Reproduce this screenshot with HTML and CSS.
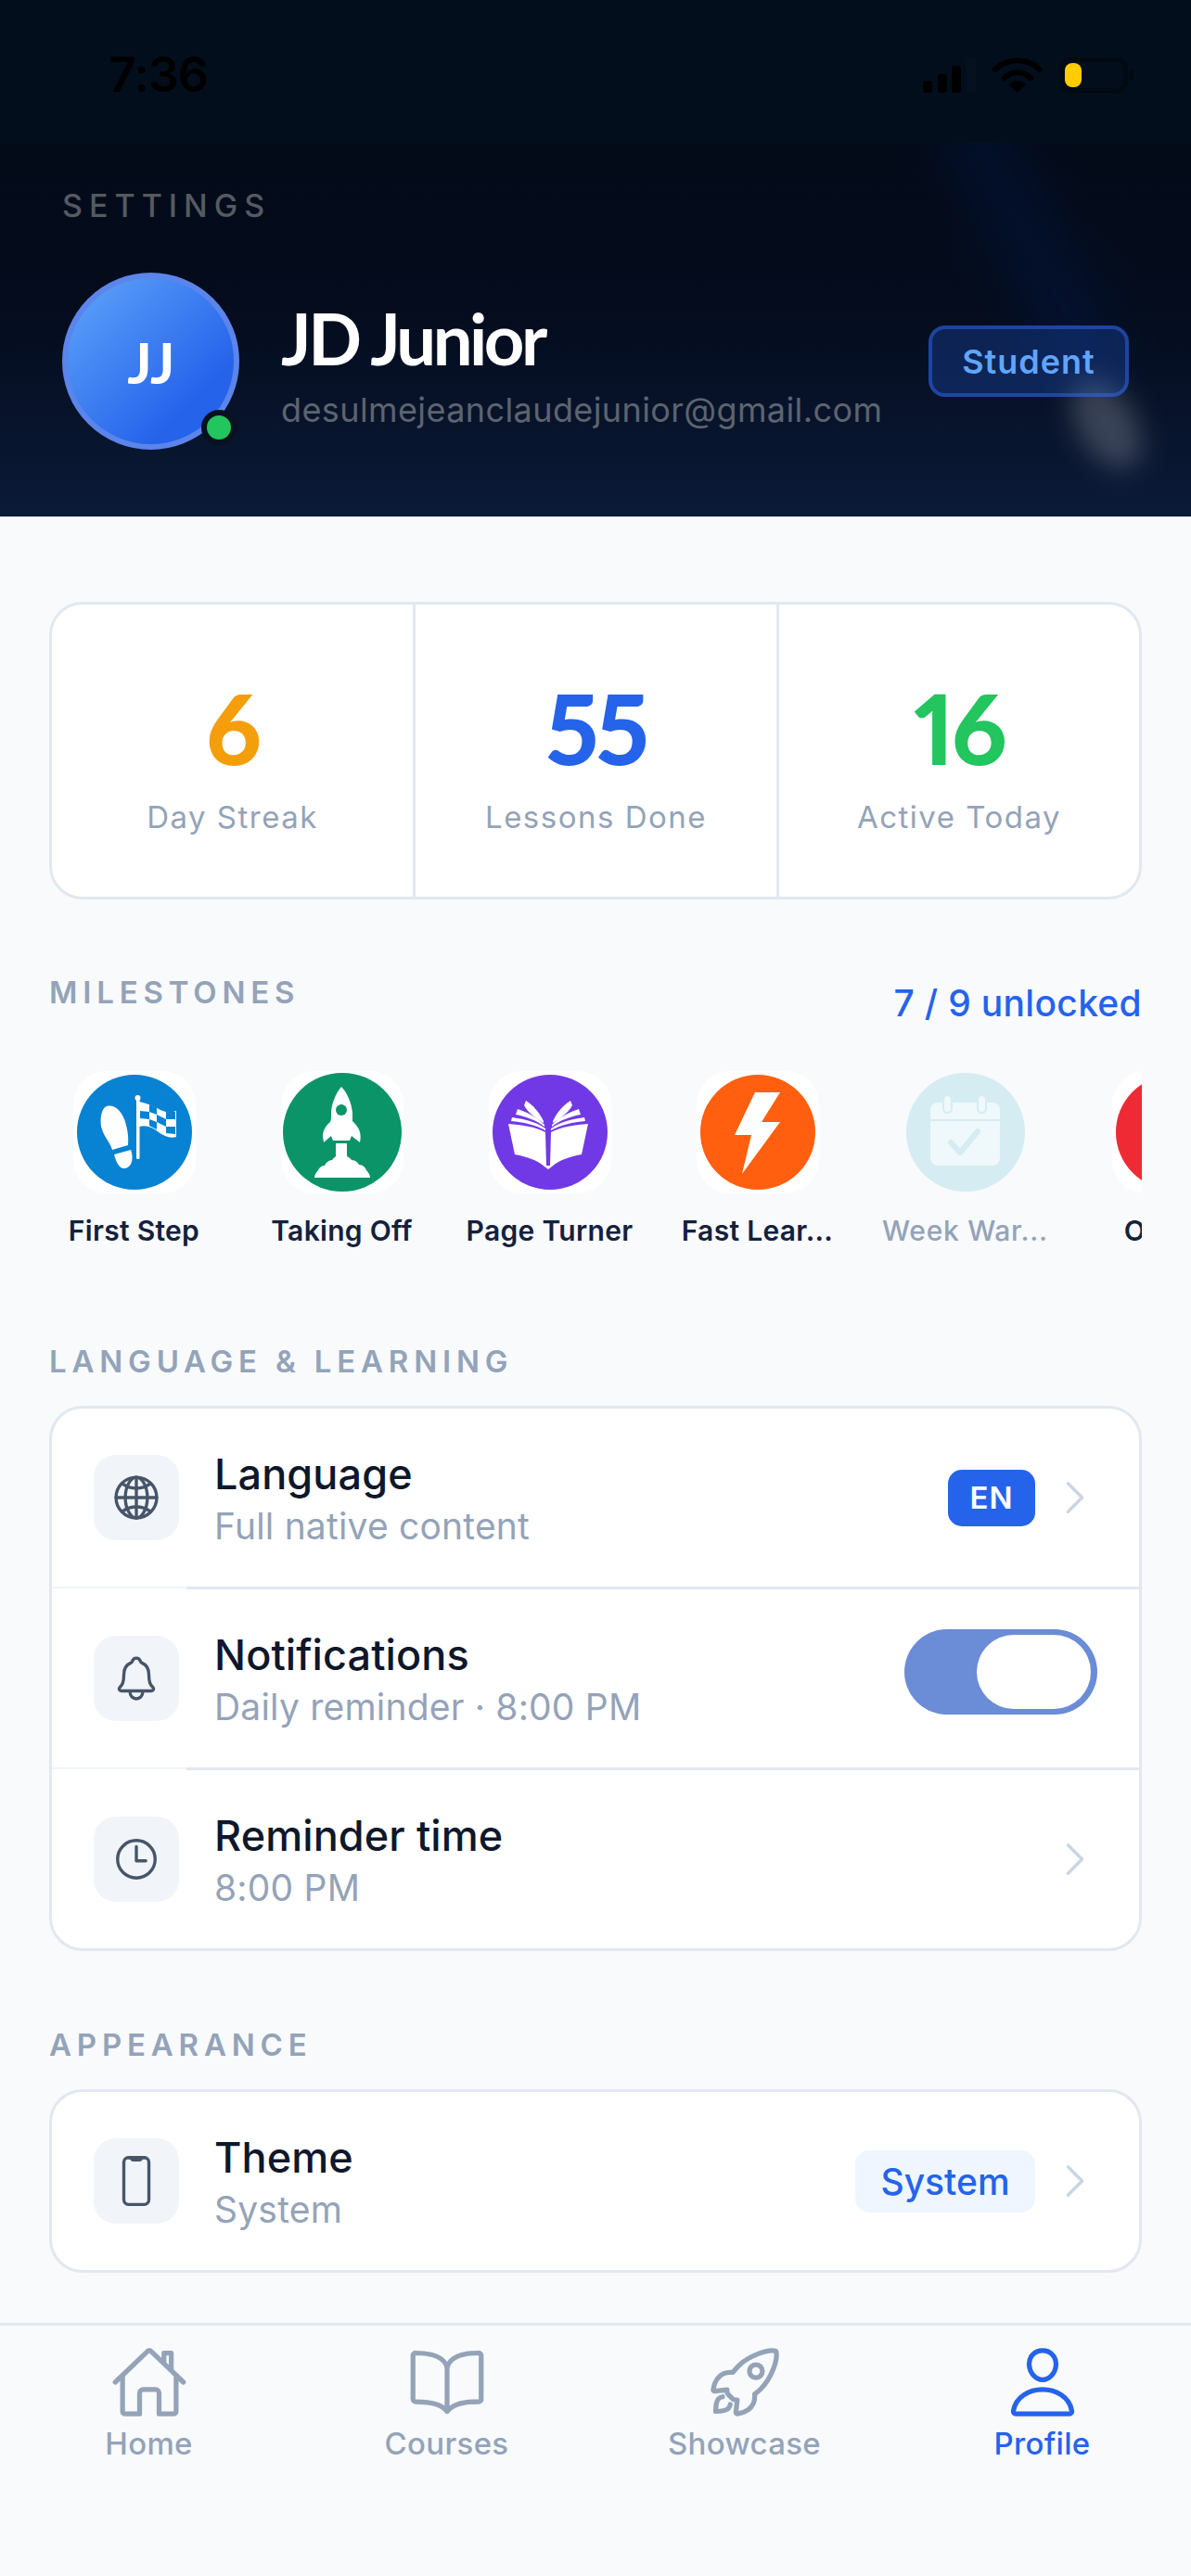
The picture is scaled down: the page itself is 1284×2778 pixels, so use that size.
FILE: index.html
```html
<!DOCTYPE html>
<html lang="en">
<head>
<meta charset="utf-8">
<title>Settings</title>
<link rel="stylesheet" href="styles.css">
</head>
<body>
<div class="app">
  <div class="status">
    <span class="time">7:36</span>
    <div class="status-icons">
      <svg class="signal" width="57" height="38" viewBox="0 0 57 38"><rect x="0" y="25" width="10" height="13" rx="3"/><rect x="16" y="18" width="10" height="20" rx="3"/><rect x="31" y="9" width="10" height="29" rx="3"/><rect class="signal-off" x="47" y="0" width="10" height="38" rx="3"/></svg>
      <svg class="wifi" width="54" height="38" viewBox="0 0 54 38"><path d="M3 13C16 0 38 0 51 13" /><path d="M13 22C21 14 33 14 41 22"/><path class="wifi-dot" d="M27 38L18 29C23 24 31 24 36 29Z"/></svg>
      <div class="battery"><span class="battery-fill"></span></div>
    </div>
  </div>
  <header class="header">
    <div class="eyebrow">SETTINGS</div>
    <div class="profile">
      <div class="avatar">JJ<span class="online"></span></div>
      <div class="who">
        <div class="name">JD Junior</div>
        <div class="email">desulmejeanclaudejunior@gmail.com</div>
      </div>
      <div class="role">Student</div>
    </div>
  </header>

  <main class="main">
    <section class="stats">
      <div class="stat"><div class="num amber">6</div><div class="stat-label">Day Streak</div></div>
      <div class="stat"><div class="num blue">55</div><div class="stat-label">Lessons Done</div></div>
      <div class="stat"><div class="num green">16</div><div class="stat-label">Active Today</div></div>
    </section>

    <section class="milestones">
      <div class="ms-head">
        <div class="label">MILESTONES</div>
        <div class="ms-count">7 / 9 unlocked</div>
      </div>
      <div class="ms-list">
        <div class="ms">
          <svg class="ms-badge" width="132" height="132" viewBox="0 0 132 132">
            <rect width="132" height="132" rx="36" fill="#fff"/>
            <circle cx="66" cy="66" r="62" fill="#0882d2"/>
            <path fill="#fff" d="M36 38C30 40 28 54 31 63C33 70 40 78 42 85L59 80C60 70 58 60 55 52C51 42 44 36 36 38Z"/>
            <path fill="#fff" d="M44 90L62 85C65 93 64 103 56 105C49 106 46 97 44 90Z"/>
            <rect x="68" y="29" width="3.5" height="66" rx="1.5" fill="#fff"/>
            <circle cx="69.5" cy="29" r="3" fill="#fff"/>
            <path fill="#fff" d="M71 33C80 35 88 38 94 42C100 45 106 45 111 43L111 71C104 73 98 70 92 66C85 60 78 58 71 60Z"/>
            <g fill="#0882d2">
              <path d="M82 36L90 39L90 47L82 44Z"/><path d="M100 44L110 44L110 52L100 52Z"/>
              <path d="M72 43L82 44L82 52L72 51Z"/><path d="M90 47L100 52L100 60L90 55Z"/>
              <path d="M82 52L90 55L90 63L82 59Z"/><path d="M100 60L110 60L110 68L100 67Z"/>
            </g>
          </svg>
          <div class="ms-name">First Step</div>
        </div>
        <div class="ms">
          <svg class="ms-badge" width="132" height="132" viewBox="0 0 132 132">
            <rect width="132" height="132" rx="36" fill="#fff"/>
            <circle cx="66" cy="66" r="64" fill="#0a9467"/>
            <path fill="#fff" d="M65 17C59 24 54 36 54 46C54 50 54 52 53 55C49 58 45 64 45 70C45 73 46 75 46 77L54 70L56 75L74 75L76 70L85 77C86 72 86 68 84 63C82 59 79 56 77 54C77 50 77 48 77 45C76 34 71 23 65 17Z"/>
            <circle cx="65" cy="42" r="6" fill="#0a9467"/>
            <path fill="#fff" d="M59 78H71V92C73 93 75 94 76 96C80 96 83 99 84 101C88 101 91 104 92 107C94 109 96 112 96 115H36C36 112 38 109 40 107C41 104 44 102 47 102C48 99 52 96 55 96C56 94 58 93 59 92Z"/>
          </svg>
          <div class="ms-name">Taking Off</div>
        </div>
        <div class="ms">
          <svg class="ms-badge" width="132" height="132" viewBox="0 0 132 132">
            <rect width="132" height="132" rx="36" fill="#fff"/>
            <circle cx="66" cy="66" r="62" fill="#7139e5"/>
            <g fill="#fff">
              <path d="M61 66C50 60 35 58 21 57L28 90C40 92 52 96 60 103L64 106L68 103C76 96 88 92 100 90L107 57C93 58 78 60 67 66L66 102H62Z"/>
              <path d="M61 62C50 54 37 52 25 50L24 54C37 55 50 58 61 64Z"/>
              <path d="M60 58C51 49 42 45 31 41L29 47C40 49 51 53 60 60Z"/>
              <path d="M59 54C54 44 48 37 40 32L38 37C42 45 50 50 59 56Z"/>
              <path d="M67 62C78 54 91 52 103 50L104 54C91 55 78 58 67 64Z"/>
              <path d="M68 58C77 49 86 45 97 41L99 47C88 49 77 53 68 60Z"/>
              <path d="M69 54C74 44 80 37 88 32L90 37C86 45 78 50 69 56Z"/>
            </g>
          </svg>
          <div class="ms-name">Page Turner</div>
        </div>
        <div class="ms">
          <svg class="ms-badge" width="132" height="132" viewBox="0 0 132 132">
            <rect width="132" height="132" rx="36" fill="#fff"/>
            <circle cx="66" cy="66" r="62" fill="#ff5f0e"/>
            <path fill="#fff" d="M63 23H90L70 55H90L49 111L59 69H41Z"/>
          </svg>
          <div class="ms-name">Fast Lear...</div>
        </div>
        <div class="ms locked">
          <svg class="ms-badge" width="132" height="132" viewBox="0 0 132 132">
            <circle cx="66" cy="66" r="64" fill="#d5ecf2"/>
            <rect x="28" y="34" width="75" height="68" rx="8" fill="#eff8fa"/>
            <rect x="42" y="26" width="9" height="19" rx="4.5" fill="#eff8fa" stroke="#d5ecf2" stroke-width="2"/>
            <rect x="79" y="26" width="9" height="19" rx="4.5" fill="#eff8fa" stroke="#d5ecf2" stroke-width="2"/>
            <rect x="28" y="52" width="75" height="2" fill="#d5ecf2"/>
            <path d="M50 77L60 88L79 65" fill="none" stroke="#d5ecf2" stroke-width="6" stroke-linecap="round" stroke-linejoin="round"/>
          </svg>
          <div class="ms-name">Week War...</div>
        </div>
        <div class="ms">
          <svg class="ms-badge" width="132" height="132" viewBox="0 0 132 132">
            <rect width="132" height="132" rx="36" fill="#fff"/>
            <circle cx="66" cy="66" r="62" fill="#ef2a35"/>
          </svg>
          <div class="ms-name">On Fire</div>
        </div>
      </div>
    </section>

    <section class="group">
      <div class="label">LANGUAGE &amp; LEARNING</div>
      <div class="card">
        <div class="row">
          <div class="tile"><svg class="ico" width="54" height="54" viewBox="0 0 512 512"><path d="M256 48C141.13 48 48 141.13 48 256s93.13 208 208 208 208-93.13 208-208S370.87 48 256 48z"/><path d="M256 48c-58.07 0-112.67 93.13-112.67 208S197.93 464 256 464s112.67-93.13 112.67-208S314.07 48 256 48z"/><path d="M117.33 117.33c38.24 27.15 86.38 43.34 138.67 43.34s100.43-16.19 138.67-43.34M394.67 394.67c-38.24-27.15-86.38-43.34-138.67-43.34s-100.43 16.19-138.67 43.34"/><path d="M256 48v416M464 256H48"/></svg></div>
          <div class="row-text"><div class="row-title">Language</div><div class="row-sub">Full native content</div></div>
          <span class="pill pill-solid">EN</span>
          <svg class="ico chev" width="54" height="54" viewBox="0 0 512 512"><path d="M184 112l144 144-144 144"/></svg>
        </div>
        <div class="row">
          <div class="tile"><svg class="ico" width="54" height="54" viewBox="0 0 512 512"><path d="M427.68 351.43C402 320 383.87 304 383.87 217.35 383.87 138 343.35 109.73 310 96c-4.43-1.82-8.6-6-9.95-10.55C294.2 65.54 277.8 48 256 48s-38.21 17.55-44 37.47c-1.35 4.6-5.52 8.71-9.95 10.53-33.39 13.75-73.87 41.92-73.87 121.35C128.13 304 110 320 84.32 351.43 73.68 364.45 83 384 101.61 384h308.88c18.51 0 27.77-19.61 17.19-32.57zM320 384v16a64 64 0 01-128 0v-16"/></svg></div>
          <div class="row-text"><div class="row-title">Notifications</div><div class="row-sub">Daily reminder · 8:00 PM</div></div>
          <div class="toggle"><span class="knob"></span></div>
        </div>
        <div class="row">
          <div class="tile"><svg class="ico" width="54" height="54" viewBox="0 0 512 512"><path d="M256 64C150 64 64 150 64 256s86 192 192 192 192-86 192-192S362 64 256 64z"/><path d="M256 128v144h96"/></svg></div>
          <div class="row-text"><div class="row-title">Reminder time</div><div class="row-sub">8:00 PM</div></div>
          <svg class="ico chev" width="54" height="54" viewBox="0 0 512 512"><path d="M184 112l144 144-144 144"/></svg>
        </div>
      </div>
    </section>

    <section class="group group-2">
      <div class="label">APPEARANCE</div>
      <div class="card">
        <div class="row">
          <div class="tile"><svg class="ico" width="54" height="54" viewBox="0 0 512 512"><rect x="128" y="16" width="256" height="480" rx="48" ry="48"/><path d="M176 16h24a8 8 0 018 8h0a16 16 0 0016 16h64a16 16 0 0016-16h0a8 8 0 018-8h24"/></svg></div>
          <div class="row-text"><div class="row-title">Theme</div><div class="row-sub">System</div></div>
          <span class="pill pill-soft">System</span>
          <svg class="ico chev" width="54" height="54" viewBox="0 0 512 512"><path d="M184 112l144 144-144 144"/></svg>
        </div>
      </div>
    </section>
  </main>

  <nav class="tabs">
    <div class="tab"><svg class="ico" width="84" height="84" viewBox="0 0 512 512"><path d="M80 212v236a16 16 0 0016 16h96V328a24 24 0 0124-24h80a24 24 0 0124 24v136h96a16 16 0 0016-16V212"/><path d="M480 256L266.89 52c-5-5.28-16.69-5.34-21.78 0L32 256M400 179V64h-48v69"/></svg><span>Home</span></div>
    <div class="tab"><svg class="ico" width="84" height="84" viewBox="0 0 512 512"><path d="M256 160c16-63.16 76.43-95.41 208-96a15.94 15.94 0 0116 16v288a16 16 0 01-16 16c-128 0-177.45 25.81-208 64-30.37-38-80-64-208-64-9.88 0-16-8.05-16-17.93V80a15.94 15.94 0 0116-16c131.57.59 192 32.84 208 96zM256 160v288"/></svg><span>Courses</span></div>
    <div class="tab"><svg class="ico" width="84" height="84" viewBox="0 0 512 512"><path d="M461.81 53.81a4.4 4.4 0 00-3.3-3.39c-54.38-13.3-180 34.09-248.13 102.17a294.9 294.9 0 00-33.09 39.08c-21-1.9-42-.3-59.88 7.5-50.49 22.2-65.18 80.18-69.28 105.07a9 9 0 009.8 10.4l81.07-8.9a180.29 180.29 0 001.1 18.3 18.15 18.15 0 005.3 11.09l31.39 31.39a18.15 18.15 0 0011.1 5.3 179.91 179.91 0 0018.19 1.1l-8.89 81a9 9 0 0010.39 9.79c24.9-4 83-18.69 105.07-69.17 7.8-17.9 9.4-38.79 7.6-59.69a293.91 293.91 0 0039.19-33.09c68.38-68 115.47-190.86 102.37-247.95zM298.66 213.67a42.7 42.7 0 1160.38 0 42.65 42.65 0 01-60.38 0z"/><path d="M109.64 352a45.06 45.06 0 00-26.35 12.84C65.67 382.52 64 448 64 448s65.52-1.67 83.15-19.31A44.73 44.73 0 00160 402.32"/></svg><span>Showcase</span></div>
    <div class="tab tab-active"><svg class="ico" width="84" height="84" viewBox="0 0 512 512"><path d="M344 144c-3.92 52.87-44 96-88 96s-84.15-43.12-88-96c-4-55 35-96 88-96s92 42 88 96z"/><path d="M256 304c-87 0-175.3 48-191.64 138.6C62.39 453.52 68.57 464 80 464h352c11.44 0 17.62-10.48 15.65-21.4C431.3 352 343 304 256 304z"/></svg><span>Profile</span></div>
  </nav>
</div>
</body>
</html>
```
FILE: styles.css
```css
* { box-sizing: border-box; }
html, body { margin: 0; padding: 0; }
body { background: #f8fafc; font-family: "Inter", "Liberation Sans", sans-serif; color: #0f172a; }
.app { width: 1284px; height: 2778px; display: flex; flex-direction: column; overflow: hidden; }

.status { height: 154px; flex: none; background: #030e1c; display: flex; justify-content: space-between; padding: 57px 68px 0 117px; }
.time { font-size: 52px; line-height: 48px; font-weight: 600; color: #000; letter-spacing: -1px; }
.status-icons { display: flex; gap: 18px; height: 40px; align-items: flex-start; padding-top: 5px; }
.signal { fill: #000; }
.signal-off { fill: #05111f; }
.wifi { fill: none; stroke: #000; stroke-width: 6; stroke-linecap: round; }
.wifi-dot { fill: #000; stroke: none; }
.battery { width: 74px; height: 38px; border: 5px solid #010912; border-radius: 12px; padding: 1px; position: relative; }
.battery::after { content: ""; position: absolute; right: -11px; top: 8px; width: 4px; height: 12px; border-radius: 0 4px 4px 0; background: #010912; }
.battery-fill { display: block; width: 18px; height: 26px; background: #ffcc00; border-radius: 8px; }

.header { position: relative; overflow: hidden; height: 403px; flex: none; padding: 48px 67px 0; background: linear-gradient(180deg, #030a18 0%, #040c1d 45%, #0b1a38 100%); }
.header::before { content: ""; position: absolute; left: 1070px; top: -54px; width: 70px; height: 300px; transform: rotate(-28deg); background: rgba(4, 26, 80, .34); filter: blur(26px); }
.header::after { content: ""; position: absolute; left: 1162px; top: 250px; width: 62px; height: 106px; border-radius: 50%; transform: rotate(-30deg); background: rgba(255, 255, 255, .2); filter: blur(14px); }
.eyebrow { position: relative; z-index: 1; font-size: 34px; line-height: 40px; font-weight: 500; letter-spacing: 7px; color: #555a61; }
.profile { position: relative; z-index: 1; display: flex; align-items: center; margin-top: 52px; }
.avatar { position: relative; width: 191px; height: 191px; flex: none; border-radius: 50%; border: 6px solid #5b85ea; background: linear-gradient(135deg, #60a5fa, #2563eb 75%); color: #fff; font-family: "Lato", sans-serif; font-size: 62px; font-weight: 700; display: flex; align-items: center; justify-content: center; letter-spacing: -1px; }
.online { position: absolute; right: -3px; bottom: -1px; width: 38px; height: 38px; border-radius: 50%; background: #22c55e; border: 6px solid #06121f; }
.who { margin-left: 45px; flex: 1; padding-top: 10px; }
.name { font-family: "Lato", sans-serif; font-size: 76px; line-height: 84px; font-weight: 700; color: #fff; letter-spacing: -3.5px; }
.email { font-size: 36px; line-height: 48px; color: #5d646e; margin-top: 11px; letter-spacing: .4px; }
.role { width: 216px; height: 77px; flex: none; border: 4px solid rgba(50, 110, 255, .45); border-radius: 18px; background: rgba(37, 99, 235, .25); color: #60a5fa; font-size: 36px; font-weight: 600; display: flex; align-items: center; justify-content: center; letter-spacing: 1px; }

.main { flex: 1; padding: 92px 53px 0 53px; }
.stats { height: 321px; display: grid; grid-template-columns: 392px 392px 1fr; background: #fff; border: 3px solid #e2e8f0; border-radius: 36px; }
.stat { display: flex; flex-direction: column; align-items: center; justify-content: center; border-right: 3px solid #e2e8f0; padding-top: 14px; }
.stat:last-child { border-right: 0; }
.num { font-family: "Lato", sans-serif; font-size: 104px; line-height: 108px; font-weight: 900; letter-spacing: -3px; font-variant-numeric: proportional-nums; font-feature-settings: "pnum" 1; }
.amber { color: #f59e0b; }
.blue { color: #2563eb; }
.green { color: #22c55e; }
.stat-label { font-size: 33px; line-height: 44px; letter-spacing: 1.5px; color: #94a3b8; margin-top: 20px; }

.label { font-size: 33px; line-height: 40px; font-weight: 600; letter-spacing: 5.8px; color: #94a3b8; }
.milestones { margin-top: 80px; }
.ms-head { display: flex; justify-content: space-between; align-items: flex-start; height: 56px; }
.ms-count { font-size: 39px; line-height: 48px; font-weight: 500; color: #2563eb; margin-top: 8px; letter-spacing: .3px; }
.ms-list { display: flex; gap: 43px; margin-top: 49px; overflow: hidden; padding-left: 1px; }
.ms { width: 181px; flex: none; display: flex; flex-direction: column; align-items: center; }
.ms-badge { display: block; flex: none; }
.ms-name { width: 181px; margin-top: 20px; font-size: 30px; line-height: 40px; font-weight: 600; color: #14213d; text-align: center; white-space: nowrap; letter-spacing: .3px; }
.locked .ms-name { color: #94a3b8; font-weight: 500; letter-spacing: .7px; }

.group { margin-top: 101px; }
.group-2 { margin-top: 81px; }
.card { margin-top: 28px; background: #fff; border: 3px solid #e2e8f0; border-radius: 36px; }
.row { height: 195px; display: flex; align-items: center; padding: 0 45px 3px; background: linear-gradient(#fff, #fff) 0 100% / 145px 1px no-repeat, linear-gradient(90deg, #f1f5f9 145px, #e2e8f0 145px) 0 100% / 100% 3px no-repeat; }
.row:last-child { height: 192px; padding-bottom: 0; background: none; }
.tile { width: 92px; height: 92px; flex: none; border-radius: 24px; background: #f1f5f9; display: flex; align-items: center; justify-content: center; color: #475569; }
.ico { fill: none; stroke: currentColor; stroke-width: 32; stroke-linecap: round; stroke-linejoin: round; display: block; }
.row-text { flex: 1; margin-left: 38px; padding-top: 3px; }
.row-title { font-size: 45px; line-height: 54px; font-weight: 500; color: #0f172a; letter-spacing: .1px; }
.row-sub { font-size: 39px; line-height: 48px; color: #94a3b8; margin-top: 5px; letter-spacing: .2px; }
.chev { color: #cbd5e1; margin-left: 16px; flex: none; margin-right: -3px; }
.pill { border-radius: 15px; display: flex; align-items: center; justify-content: center; flex: none; }
.pill-solid { width: 94px; height: 61px; background: #2563eb; color: #fff; font-size: 33px; font-weight: 600; letter-spacing: 1px; }
.pill-soft { width: 194px; height: 67px; background: #eff6ff; color: #2563eb; font-size: 39px; font-weight: 500; }
.toggle { width: 208px; height: 92px; flex: none; margin-bottom: 14px; border-radius: 46px; background: #6b8cd6; display: flex; align-items: center; justify-content: flex-end; padding-right: 7px; }
.knob { width: 123px; height: 80px; border-radius: 40px; background: #fff; display: block; }

.tabs { height: 273px; flex: none; border-top: 3px solid #e2e8f0; background: #f8fafc; display: grid; grid-template-columns: repeat(4, 1fr); padding-top: 19px; }
.tab { display: flex; flex-direction: column; align-items: center; color: #94a3b8; }
.tab span { font-size: 33px; line-height: 40px; font-weight: 500; margin-top: 4px; letter-spacing: .3px; }
.tab-active { color: #2563eb; }
```
